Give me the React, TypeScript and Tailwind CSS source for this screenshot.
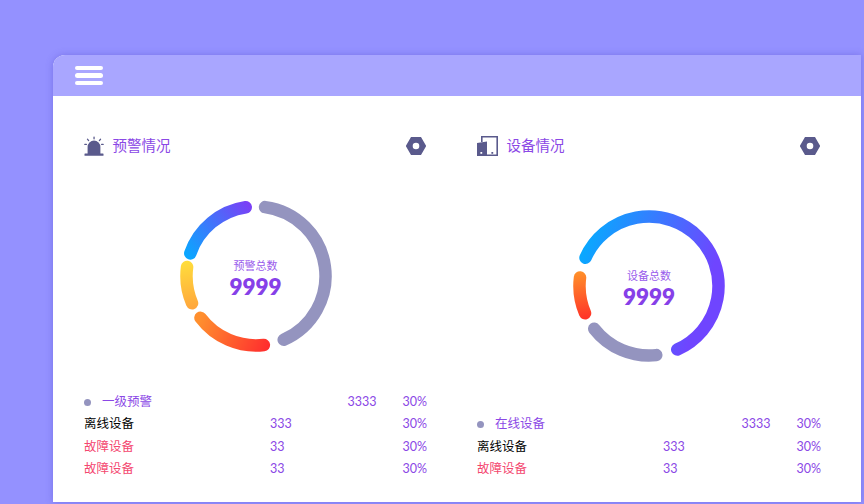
const FONT = "font-['Lato','Noto_Sans_CJK_SC',sans-serif]";

type Arc = { from: number; to: number; stroke: string };

// angles are degrees clockwise from 12 o'clock
function arcPath(from: number, to: number, r: number) {
  const point = (deg: number) => {
    const a = (deg * Math.PI) / 180;
    return `${(76 + r * Math.sin(a)).toFixed(2)} ${(76 - r * Math.cos(a)).toFixed(2)}`;
  };
  const sweep = ((to - from) % 360 + 360) % 360;
  return `M ${point(from)} A ${r} ${r} 0 ${sweep > 180 ? 1 : 0} 1 ${point(to)}`;
}

function Gradients() {
  return (
    <defs>
      <linearGradient id="blue" gradientUnits="userSpaceOnUse" x1="8" y1="55" x2="70" y2="5">
        <stop offset="0" stopColor="#0ba6ff" />
        <stop offset="1" stopColor="#7b3ff6" />
      </linearGradient>
      <linearGradient id="yellow" gradientUnits="userSpaceOnUse" x1="8" y1="62" x2="16" y2="108">
        <stop offset="0" stopColor="#ffdc3c" />
        <stop offset="1" stopColor="#ffa63c" />
      </linearGradient>
      <linearGradient id="orange" gradientUnits="userSpaceOnUse" x1="20" y1="118" x2="90" y2="150">
        <stop offset="0" stopColor="#ff8f2e" />
        <stop offset="1" stopColor="#ff2a2e" />
      </linearGradient>
      <linearGradient id="red" gradientUnits="userSpaceOnUse" x1="8" y1="62" x2="16" y2="108">
        <stop offset="0" stopColor="#ff8f2a" />
        <stop offset="1" stopColor="#ff3328" />
      </linearGradient>
      <linearGradient id="main" gradientUnits="userSpaceOnUse" x1="8" y1="50" x2="130" y2="90">
        <stop offset="0" stopColor="#0aa7ff" />
        <stop offset="1" stopColor="#6f45ff" />
      </linearGradient>
    </defs>
  );
}

function Donut({ arcs, label, className }: { arcs: Arc[]; label: string; className: string }) {
  return (
    <div className={`relative mx-auto h-[152px] w-[152px] ${className}`}>
      <svg width="152" height="152" viewBox="0 0 152 152" fill="none">
        <Gradients />
        {arcs.map((arc) => (
          <path
            key={arc.from}
            d={arcPath(arc.from, arc.to, 69.5)}
            stroke={arc.stroke}
            strokeWidth="12.5"
            strokeLinecap="round"
          />
        ))}
      </svg>
      <div className="absolute inset-0 flex flex-col items-center justify-center pt-[7px] text-[#8640e8]">
        <span className="text-[11px] leading-[14px] text-[#9a5cec]">{label}</span>
        <span className="text-[22.5px] font-extrabold leading-[27px]">9999</span>
      </div>
    </div>
  );
}

function AlarmIcon() {
  return (
    <svg width="20" height="20" viewBox="0 0 20 20" fill="#5a5a8c">
      <path d="M3.6 18V11a6.4 6.4 0 0 1 12.8 0v7z" />
      <rect x="0.5" y="17.6" width="19" height="2.2" rx="0.4" />
      <rect x="9.4" y="0.4" width="1.3" height="3" rx="0.6" />
      <rect x="3.4" y="2.4" width="1.3" height="3" rx="0.6" transform="rotate(-40 4 3.9)" />
      <rect x="15.3" y="2.4" width="1.3" height="3" rx="0.6" transform="rotate(40 15.9 3.9)" />
      <rect x="0.2" y="7.8" width="2.8" height="1.2" rx="0.6" />
      <rect x="17" y="7.8" width="2.8" height="1.2" rx="0.6" />
    </svg>
  );
}

function DeviceIcon() {
  return (
    <svg width="21" height="20" viewBox="0 0 21 20" fill="#5a5a8c">
      <path d="M4 0h17v20H10v-1.6h9.4V1.6H5.6V6H4z" />
      <path d="M0 7l10-1.4V20H0z" />
      <rect x="3.4" y="16" width="1.8" height="1.8" fill="#fff" />
      <rect x="14.4" y="16" width="1.8" height="1.8" />
    </svg>
  );
}

function NutIcon() {
  return (
    <svg width="22" height="20" viewBox="0 0 22 20">
      <path
        fillRule="evenodd"
        fill="#5a5a8c"
        d="M6 1h10l5.2 9-5.2 9H6L.8 10zM11 6.7a3.3 3.3 0 1 0 0 6.6 3.3 3.3 0 0 0 0-6.6z"
      />
    </svg>
  );
}

function FirstRow({ name }: { name: string }) {
  return (
    <div className="flex h-[22.5px] items-center text-[#8b48e6]">
      <span className="h-[7px] w-[7px] rounded-full bg-[#9494bf]" />
      <span className="ml-[11px]">{name}</span>
      <span className="ml-auto mr-[26px]">3333</span>
      <span>30%</span>
    </div>
  );
}

function Row({ name, value, color }: { name: string; value: string; color: string }) {
  return (
    <div className="flex h-[22.5px] items-center">
      <span className={`w-[186px] ${color}`}>{name}</span>
      <span className="text-[#8b48e6]">{value}</span>
      <span className="ml-auto text-[#8b48e6]">30%</span>
    </div>
  );
}

function Panel({ icon, title, children }: { icon: React.ReactNode; title: string; children: React.ReactNode }) {
  return (
    <section className="flex flex-col">
      <div className="flex h-6 items-center justify-between">
        <div className="flex items-center gap-[8.5px]">
          {icon}
          <h2 className="text-[14.5px] font-normal text-[#8b48e6]">{title}</h2>
        </div>
        <NutIcon />
      </div>
      {children}
    </section>
  );
}

export default function App() {
  return (
    <div className={`h-[504px] w-[864px] overflow-hidden bg-[#9491ff] pl-[53px] pr-[3px] pt-[55px] ${FONT}`}>
      <div className="flex h-[447px] flex-col overflow-hidden rounded-tl-xl bg-white shadow-[0_0_7px_rgba(70,60,190,0.35)]">
        <header className="flex h-[41px] flex-col justify-center gap-[3px] bg-[#a9a6ff] pl-[22px]">
          <span className="h-[4.5px] w-7 rounded-full bg-white" />
          <span className="h-[4.5px] w-7 rounded-full bg-white" />
          <span className="h-[4.5px] w-7 rounded-full bg-white" />
        </header>
        <main className="grid flex-1 grid-cols-[343px_344px] gap-x-[50px] pb-[21px] pl-[31px] pt-[38px] text-[12.5px]">
          <Panel icon={<AlarmIcon />} title="预警情况">
            <Donut
              className="mt-[42px]"
              label="预警总数"
              arcs={[
                { from: 7.5, to: 156.5, stroke: "#9494bf" },
                { from: 289, to: 351.5, stroke: "url(#blue)" },
                { from: 247, to: 277.5, stroke: "url(#yellow)" },
                { from: 173.5, to: 233, stroke: "url(#orange)" },
              ]}
            />
            <div className="mt-auto">
              <FirstRow name="一级预警" />
              <Row name="离线设备" value="333" color="text-black" />
              <Row name="故障设备" value="33" color="text-[#f4476f]" />
              <Row name="故障设备" value="33" color="text-[#f4476f]" />
            </div>
          </Panel>
          <Panel icon={<DeviceIcon />} title="设备情况">
            <Donut
              className="mt-[52px]"
              label="设备总数"
              arcs={[
                { from: 294, to: 156, stroke: "url(#main)" },
                { from: 247, to: 277, stroke: "url(#red)" },
                { from: 174, to: 232, stroke: "#9494bf" },
              ]}
            />
            <div className="mt-auto">
              <FirstRow name="在线设备" />
              <Row name="离线设备" value="333" color="text-black" />
              <Row name="故障设备" value="33" color="text-[#f4476f]" />
            </div>
          </Panel>
        </main>
      </div>
    </div>
  );
}
